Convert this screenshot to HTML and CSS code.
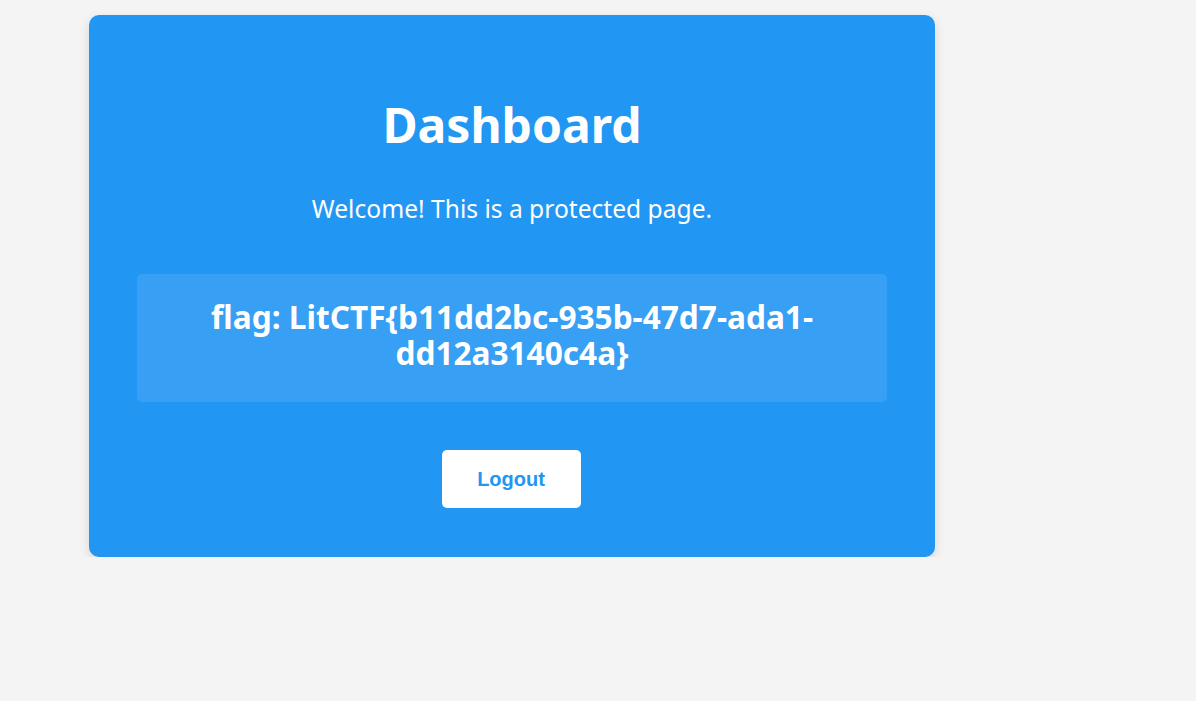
FILE: index.html
```html
<!DOCTYPE html>
<html lang="en">
<head>
<meta charset="utf-8">
<title>Dashboard</title>
<link rel="stylesheet" href="styles.css">
</head>
<body>
  <main class="card">
    <h1 class="title">Dashboard</h1>
    <p class="welcome">Welcome! This is a protected page.</p>
    <div class="flag-box">
      <h2 class="flag">flag: LitCTF{b11dd2bc-935b-47d7-ada1-dd12a3140c4a}</h2>
    </div>
    <button class="logout" type="button">Logout</button>
  </main>
</body>
</html>
```

FILE: styles.css
```css
html, body {
  margin: 0;
  padding: 0;
}

body {
  background: #f4f4f4;
  font-family: "Noto Sans", "Open Sans", sans-serif;
  padding: 15px 0 0 89px;
}

.card {
  box-sizing: border-box;
  width: 846px;
  height: 542px;
  background: #2196f3;
  border-radius: 10px;
  box-shadow: 0 4px 12px rgba(0, 0, 0, 0.12);
  padding: 48px;
  display: flex;
  flex-direction: column;
  align-items: center;
  color: #fff;
  text-align: center;
}

.title {
  margin: 30px 0 0;
  font-size: 48px;
  font-weight: 700;
  line-height: 64px;
}

.welcome {
  margin: 36px 0 0;
  font-size: 24.6px;
  line-height: 32px;
}

.flag-box {
  box-sizing: border-box;
  width: 750px;
  height: 128px;
  margin-top: 49px;
  background: rgba(255, 255, 255, 0.1);
  border-radius: 5px;
  display: flex;
  align-items: center;
  justify-content: center;
  padding: 0 60px 6px;
}

.flag {
  margin: 0;
  font-size: 31.6px;
  font-weight: 700;
  line-height: 36px;
}

.logout {
  margin-top: 48px;
  margin-right: 2px;
  width: 139px;
  height: 58px;
  border: none;
  border-radius: 5px;
  background: #fff;
  color: #2196f3;
  font-family: "Liberation Sans", Arial, sans-serif;
  font-size: 20px;
  font-weight: 700;
  cursor: pointer;
}
```
